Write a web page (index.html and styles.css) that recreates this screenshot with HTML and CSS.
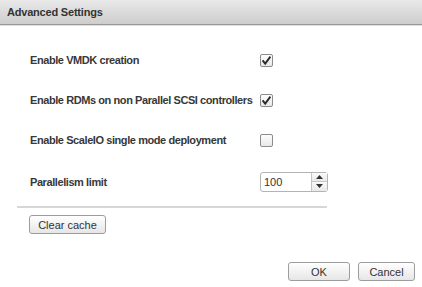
FILE: index.html
```html
<!DOCTYPE html>
<html lang="en">
<head>
    <meta charset="UTF-8">
    <meta name="viewport" content="width=device-width, initial-scale=1.0">
    <title>Advanced Settings</title>
    <link rel="stylesheet" href="styles.css">
</head>
<body>
    <div class="dialog">
        <div class="dialog-title">Advanced Settings</div>

        <div class="dialog-body">
            <div class="row">
                <span class="label">Enable VMDK creation</span>
                <span class="check checked">
                    <svg viewBox="0 0 13 13" width="13" height="13"><path d="M2.6 6.4 L5.2 9.6 L10.4 2.6" fill="none" stroke="#2b2b2b" stroke-width="1.9"/></svg>
                </span>
            </div>
            <div class="row">
                <span class="label">Enable RDMs on non Parallel SCSI controllers</span>
                <span class="check checked">
                    <svg viewBox="0 0 13 13" width="13" height="13"><path d="M2.6 6.4 L5.2 9.6 L10.4 2.6" fill="none" stroke="#2b2b2b" stroke-width="1.9"/></svg>
                </span>
            </div>
            <div class="row">
                <span class="label">Enable ScaleIO single mode deployment</span>
                <span class="check"></span>
            </div>
            <div class="row row-last">
                <span class="label">Parallelism limit</span>
                <div class="spinner">
                    <span class="spinner-value">100</span>
                    <div class="spinner-buttons">
                        <span class="spin-btn"><svg viewBox="0 0 7 4" width="7" height="4"><path d="M0 4 L3.5 0 L7 4 Z" fill="#333"/></svg></span>
                        <span class="spin-btn"><svg viewBox="0 0 7 4" width="7" height="4"><path d="M0 0 L7 0 L3.5 4 Z" fill="#333"/></svg></span>
                    </div>
                </div>
            </div>

            <div class="separator"></div>

            <button class="btn btn-clear">Clear cache</button>
        </div>

        <div class="dialog-footer">
            <button class="btn btn-ok">OK</button>
            <button class="btn btn-cancel">Cancel</button>
        </div>
    </div>
</body>
</html>
```

FILE: styles.css
```css
body {
    margin: 0;
    font-family: "Liberation Sans", Arial, sans-serif;
    color: #333;
    background: #fff;
}

.dialog {
    width: 422px;
    height: 287px;
    display: flex;
    flex-direction: column;
}

/* barre de titre */
.dialog-title {
    height: 24px;
    line-height: 25px;
    padding-left: 7px;
    font-size: 11px;
    font-weight: bold;
    letter-spacing: -0.2px;
    color: #333;
    background: linear-gradient(#e9e9e9, #cdcdcd);
    border-bottom: 1px solid #999;
    box-shadow: 0 1px 0 #dcdcdc;
}

.dialog-body {
    padding-top: 15px;
    display: flex;
    flex-direction: column;
}

.row {
    height: 40px;
    display: flex;
    align-items: center;
    padding-left: 30px;
}

.row-last {
    height: 42px;
    padding-top: 1px;
    box-sizing: border-box;
}

.label {
    width: 230px;
    font-size: 11px;
    font-weight: bold;
    letter-spacing: -0.42px;
    white-space: nowrap;
    color: #383838;
}

.check {
    width: 11px;
    height: 11px;
    border: 1px solid #8c8c8c;
    border-radius: 2px;
    background: linear-gradient(#fdfdfd, #e8e8e8);
    position: relative;
}

.check svg {
    position: absolute;
    left: -1px;
    top: -1px;
}

.spinner {
    width: 66px;
    height: 18px;
    border: 1px solid #b4b4b4;
    border-radius: 3px;
    display: flex;
    font-size: 11px;
}

.spinner-value {
    flex: 1;
    line-height: 18px;
    padding-left: 3px;
    color: #333;
}

.spinner-buttons {
    width: 15px;
    border-left: 1px solid #c4c4c4;
    display: flex;
    flex-direction: column;
}

.spin-btn {
    flex: 1;
    display: flex;
    align-items: center;
    justify-content: center;
    background: linear-gradient(#fafafa, #e9e9e9);
}

.spin-btn + .spin-btn {
    border-top: 1px solid #c8c8c8;
}

.separator {
    margin: 4px 0 0 17px;
    width: 310px;
    height: 0;
    border-top: 2px solid #d6d6d6;
}

.btn {
    font-family: "Liberation Sans", Arial, sans-serif;
    font-size: 11px;
    color: #333;
    height: 19px;
    padding: 0;
    border: 1px solid #9d9d9d;
    border-radius: 3px;
    background: linear-gradient(#ffffff, #e6e6e6);
}

.btn-clear {
    align-self: flex-start;
    margin: 7px 0 0 29px;
    width: 77px;
}

.dialog-footer {
    display: flex;
    justify-content: flex-end;
    gap: 8px;
    padding: 28px 7px 0 0;
}

.btn-ok {
    width: 62px;
}

.btn-cancel {
    width: 57px;
}
```
